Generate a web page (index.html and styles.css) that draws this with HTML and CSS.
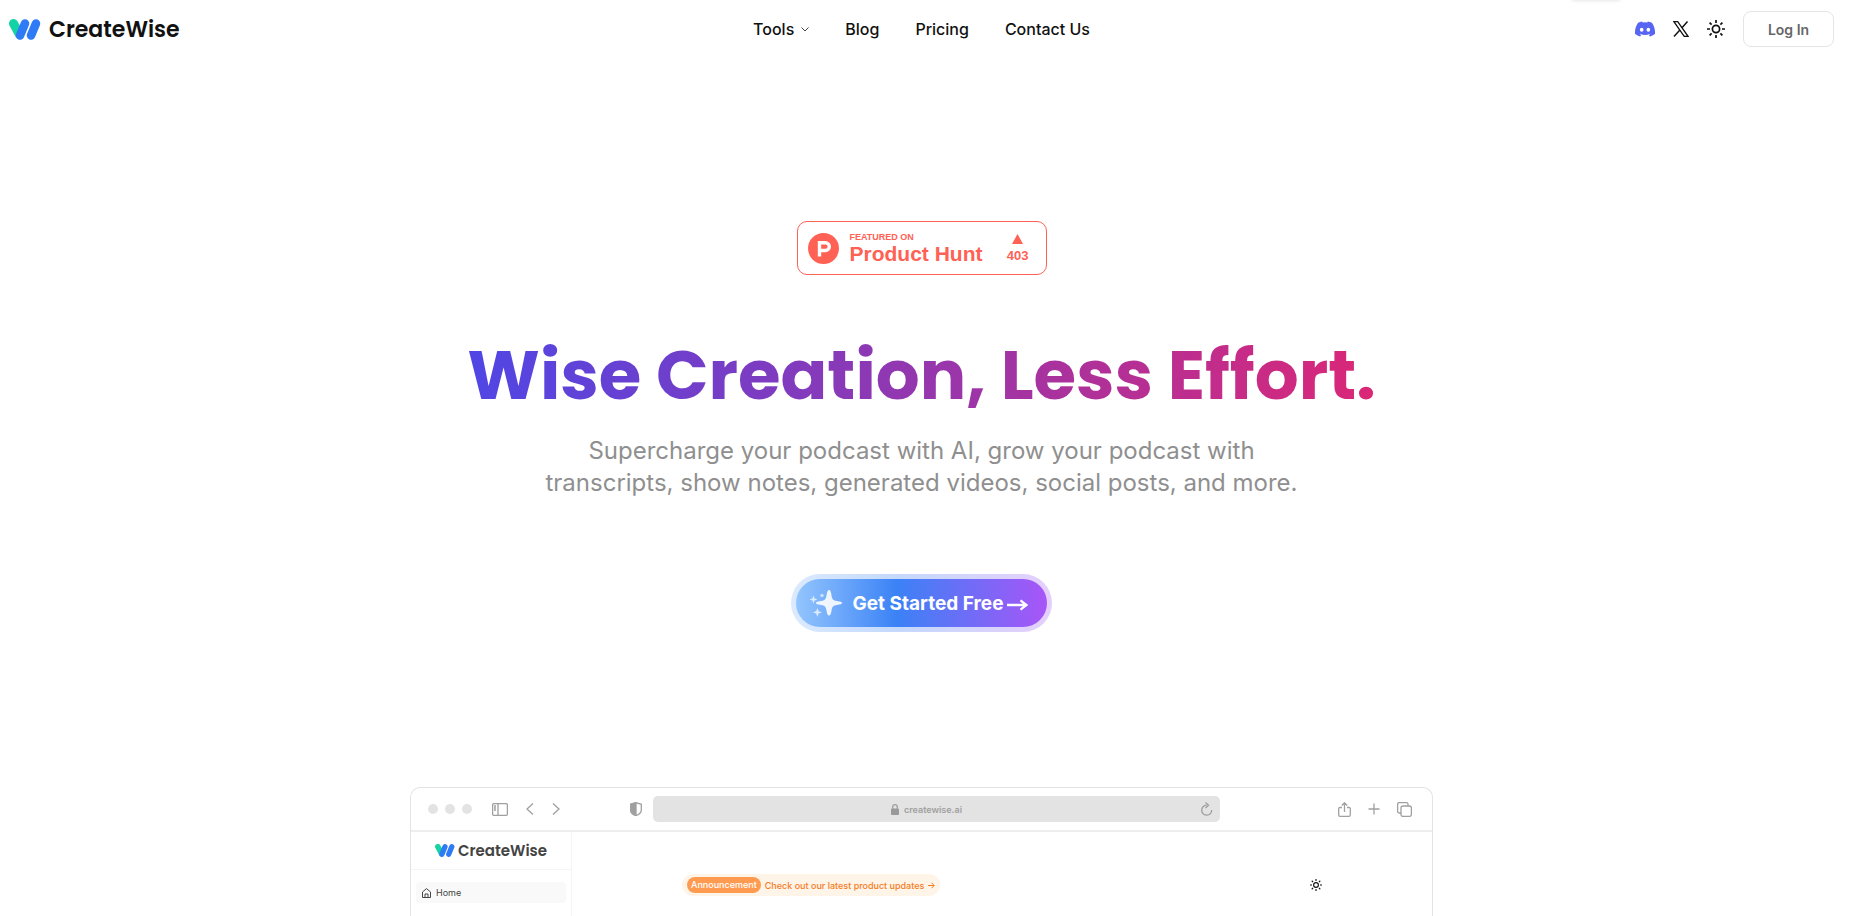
FILE: index.html
```html
<!DOCTYPE html>
<html lang="en">
<head>
    <meta charset="UTF-8">
    <meta name="viewport" content="width=device-width, initial-scale=1.0">
    <title>CreateWise</title>
    <link rel="stylesheet" href="styles.css">
</head>
<body>
    <!-- shared icons -->
    <svg class="sprite" aria-hidden="true">
        <symbol id="logo-mark" viewBox="0 0 32 21">
            <path d="M4.500 4.500 L10.500 15.500" stroke="#14d3a5" stroke-width="9" stroke-linecap="round"/>
            <path d="M16 4.500 L11 16.500 M27 4.500 L22 16.500" stroke="#2f7bf6" stroke-width="8.500" stroke-linecap="round"/>
        </symbol>
        <symbol id="sun" viewBox="0 0 18 18">
            <g fill="none" stroke="currentColor" stroke-width="1.700">
                <circle cx="9" cy="9" r="3.600"/>
                <path d="M9 0v3M9 15v3M0 9h3M15 9h3M2.600 2.600l2 2M13.400 13.400l2 2M2.600 15.400l2-2M13.400 4.600l2-2"/>
            </g>
        </symbol>
    </svg>

    <div class="top-shadow"></div>

    <header class="header">
        <a href="#" class="logo">
            <svg class="logo-mark"><use href="#logo-mark"/></svg>
            <span>CreateWise</span>
        </a>
        <nav class="nav">
            <button type="button" class="nav-tools">Tools
                <svg width="8" height="5" viewBox="0 0 8 5" fill="none" stroke="#444"><path d="M.5.500 4 4 7.500.500"/></svg>
            </button>
            <a href="#">Blog</a>
            <a href="#">Pricing</a>
            <a href="#">Contact Us</a>
        </nav>
        <div class="header-actions">
            <a href="#" aria-label="Discord">
                <svg width="20" height="16" viewBox="0 0 127 96" fill="#5865f2"><path d="M107.700 8.070A105.150 105.150 0 0 0 81.470 0a72 72 0 0 0-3.360 6.830 97.700 97.700 0 0 0-29.110 0A72 72 0 0 0 45.640 0a106 106 0 0 0-26.250 8.090C2.790 32.650-1.710 56.600.540 80.210A105.700 105.700 0 0 0 32.710 96.360a77.700 77.700 0 0 0 6.890-11.110 68.400 68.400 0 0 1-10.850-5.180c.910-.660 1.800-1.340 2.660-2a75.600 75.600 0 0 0 64.320 0c.870.710 1.760 1.390 2.660 2a68.700 68.700 0 0 1-10.870 5.190 77 77 0 0 0 6.890 11.100 105.300 105.300 0 0 0 32.190-16.140c2.640-27.380-4.510-51.110-18.900-72.150ZM42.450 65.690C36.180 65.690 31 60 31 53s5-12.740 11.430-12.740S54 46 53.890 53s-5.050 12.690-11.440 12.690Zm42.240 0C78.410 65.690 73.250 60 73.250 53s5-12.740 11.440-12.740S96.230 46 96.120 53s-5.040 12.690-11.430 12.690Z"/></svg>
            </a>
            <a href="#" aria-label="X">
                <svg width="16" height="16" viewBox="0 0 16 16" fill="none" stroke="#111"><path d="M.900.700H4.700L15 15.300H11.200Z" stroke-width="1.300"/><path d="M14.500.500 8.800 7M6.900 9.100 1 15.500" stroke-width="1.500"/></svg>
            </a>
            <button type="button" class="icon-button" aria-label="Switch theme">
                <svg width="18" height="18"><use href="#sun"/></svg>
            </button>
            <button type="button" class="login">Log In</button>
        </div>
    </header>

    <main class="hero">
        <a href="#" class="product-hunt">
            <svg width="31" height="31" viewBox="0 0 31 31"><circle cx="15.500" cy="15.500" r="15.500" fill="#ff6154"/><path d="M11.500 23.500V9.700h5.900a3.900 3.900 0 0 1 0 7.800H11.500" fill="none" stroke="#fff" stroke-width="3.400"/></svg>
            <span class="ph-label">
                <small>FEATURED ON</small>
                <strong>Product Hunt</strong>
            </span>
            <span class="ph-votes">
                <svg width="11" height="10" viewBox="0 0 11 10" fill="#ff6154"><path d="M5.500 0 11 10H0Z"/></svg>
                403
            </span>
        </a>

        <h1>Wise Creation, Less Effort.</h1>
        <p class="tagline">Supercharge your podcast with AI, grow your podcast with<br>transcripts, show notes, generated videos, social posts, and more.</p>

        <button type="button" class="cta">
            <svg width="32" height="28" viewBox="0 0 32 28" fill="#fff">
                <path opacity=".88" d="M19 1C20.500 1 21 3 21.500 6.500 22.200 10.500 23 11.300 27 12 30.500 12.500 32 13 32 14S30.500 15.500 27 16C23 16.700 22.200 17.500 21.500 21.500 21 25 20.500 26.500 19 26.500S17 25 16.500 21.500C15.800 17.500 15 16.700 11 16 7.500 15.500 6 15 6 14S7.500 12.500 11 12C15 11.300 15.800 10.500 16.500 6.500 17 3 17.500 1 19 1Z"/>
                <path opacity=".7" d="M3.500 6.500 4.600 9.400 7.500 10.500 4.600 11.600 3.500 14.500 2.400 11.600-.5 10.500 2.400 9.400ZM7.500 19 8.600 22.100 12 23.500 8.600 24.600 7.500 28 6.100 24.600 3 23.500 6.100 22.100Z"/>
                <circle cx="12" cy="6.500" r="1.700" opacity=".6"/>
            </svg>
            <span>Get Started Free</span>
            <svg class="cta-arrow" width="21" height="12" viewBox="0 0 21 12" fill="none" stroke="#fff" stroke-width="2.300"><path d="M0 6h19M13.500 1.300l6 4.700-6 4.700"/></svg>
        </button>

        <!-- app preview in a browser frame -->
        <section class="browser">
            <div class="toolbar">
                <div class="tool-group tool-left">
                    <span class="dots"><i></i><i></i><i></i></span>
                    <svg width="16" height="13" viewBox="0 0 16 13"><rect x=".6" y=".6" width="14.800" height="11.800" rx="1.500"/><path d="M6 .5v12M2 3h2M2 5h2M2 7h2"/></svg>
                    <svg class="back" width="8" height="12" viewBox="0 0 8 12"><path d="M7 .5 1 6l6 5.500"/></svg>
                    <svg class="forward" width="8" height="12" viewBox="0 0 8 12"><path d="M1 .5 7 6l-6 5.500"/></svg>
                </div>
                <svg class="shield" width="12" height="14" viewBox="0 0 12 14"><path d="M6 .7 11.300 2.300V8C11.300 10.500 9 12.500 6 13.500 3 12.500.7 10.500.7 8V2.300Z"/><path d="M6 .7V13.500C3 12.500.7 10.500.7 8V2.300Z" fill="#a0a0a0"/></svg>
                <div class="address">
                    <svg width="8" height="11" viewBox="0 0 8 11"><rect y="4.500" width="8" height="6.500" rx="1" fill="#999" stroke="none"/><path d="M1.700 5V3a2.300 2.300 0 0 1 4.600 0v2"/></svg>
                    <span>createwise.ai</span>
                    <svg class="reload" width="13" height="14" viewBox="0 0 13 14"><path d="M6.500 3.200A5 5 0 1 0 11.700 8M5.500 .5 8.500 3.200 5.500 6"/></svg>
                </div>
                <div class="tool-group tool-right">
                    <svg width="13" height="15" viewBox="0 0 13 15"><path d="M4 5.500H2A1.300 1.300 0 0 0 .700 7v6A1.300 1.300 0 0 0 2 14.300h9A1.300 1.300 0 0 0 12.300 13V7A1.300 1.300 0 0 0 11 5.500H9M6.500 10V1M3.800 3.500 6.500.800 9.200 3.500"/></svg>
                    <svg width="12" height="12" viewBox="0 0 12 12"><path d="M6 .5v11M.5 6h11"/></svg>
                    <svg width="15" height="15" viewBox="0 0 15 15"><rect x="4" y="4" width="10.400" height="10.400" rx="2"/><path d="M4 11H2.200A1.600 1.600 0 0 1 .6 9.400V2.200A1.600 1.600 0 0 1 2.200.600h7.200A1.600 1.600 0 0 1 11 2.200V4"/></svg>
                </div>
            </div>
            <div class="app">
                <aside class="sidebar">
                    <div class="app-logo">
                        <svg><use href="#logo-mark"/></svg>
                        <span>CreateWise</span>
                    </div>
                    <a href="#" class="menu-item">
                        <svg width="9" height="10" viewBox="0 0 9 10"><path d="M.5 4 4.500.600 8.500 4V9.500H.5ZM3 9.500V6h3v3.500"/></svg>
                        Home
                    </a>
                </aside>
                <div class="app-content">
                    <a href="#" class="announcement">
                        <span class="tag">Announcement</span>
                        Check out our latest product updates
                        <svg width="7" height="7" viewBox="0 0 7 7"><path d="M0 3.500h6M3.500.800 6.200 3.500 3.500 6.200"/></svg>
                    </a>
                    <svg class="app-sun" width="12" height="12"><use href="#sun"/></svg>
                </div>
            </div>
        </section>
    </main>
</body>
</html>
```
FILE: styles.css
```css
* {
    box-sizing: border-box;
}

body {
    margin: 0;
    padding-right: 15px;
    height: 100vh;
    overflow: hidden;
    display: flex;
    flex-direction: column;
    background: #fff;
    color: #111;
    font-family: Inter, "Liberation Sans", sans-serif;
}

a {
    color: inherit;
    text-decoration: none;
}

button {
    font-family: inherit;
    color: inherit;
    background: none;
    border: none;
    padding: 0;
    cursor: pointer;
}

svg {
    display: block;
    flex-shrink: 0;
}

.sprite {
    position: absolute;
    width: 0;
    height: 0;
}

.top-shadow {
    position: absolute;
    top: -10px;
    right: 236px;
    width: 52px;
    height: 10px;
    border-radius: 6px;
    box-shadow: 0 0 4px rgba(0, 0, 0, 0.15);
}

/* header */
.header {
    display: grid;
    grid-template-columns: 1fr auto 1fr;
    align-items: center;
    flex-shrink: 0;
    height: 58px;
    padding: 0 9px;
}

.logo {
    display: flex;
    align-items: center;
    gap: 8px;
    font-family: Poppins, Inter, sans-serif;
    font-size: 22px;
    font-weight: 600;
}

.logo-mark {
    width: 32px;
    height: 21px;
}

.nav {
    display: flex;
    align-items: center;
    gap: 36px;
    font-size: 16px;
    font-weight: 500;
}

.nav-tools {
    display: flex;
    align-items: center;
    gap: 7px;
    font-size: 16px;
    font-weight: 500;
}

.header-actions {
    display: flex;
    align-items: center;
    justify-content: flex-end;
    gap: 18px;
}

.login {
    width: 91px;
    height: 36px;
    border: 1px solid #e5e5e5;
    border-radius: 8px;
    font-size: 14px;
    font-weight: 600;
    color: #666;
}

/* hero */
.hero {
    flex: 1;
    min-height: 0;
    display: flex;
    flex-direction: column;
    align-items: center;
    padding-top: 163px;
}

.product-hunt {
    display: flex;
    align-items: center;
    flex-shrink: 0;
    width: 250px;
    height: 54px;
    padding: 0 17px 0 10px;
    border: 1px solid #ff6154;
    border-radius: 10px;
    color: #ff6154;
    font-family: "Liberation Sans", Arial, sans-serif;
    font-weight: bold;
}

.ph-label {
    display: flex;
    flex-direction: column;
    margin-left: 11px;
}

.ph-label small {
    font-size: 9px;
    line-height: 11px;
}

.ph-label strong {
    font-size: 21px;
    line-height: 22px;
}

.ph-votes {
    display: flex;
    flex-direction: column;
    align-items: center;
    gap: 4px;
    margin-left: auto;
    font-size: 13px;
    line-height: 15px;
}

h1 {
    margin: 54px 0 0;
    font-family: Poppins, Inter, sans-serif;
    font-size: 69px;
    font-weight: 700;
    line-height: 92px;
    white-space: nowrap;
    color: transparent;
    background: linear-gradient(to right, #4f46e5, #db2777);
    -webkit-background-clip: text;
    background-clip: text;
}

.tagline {
    margin: 14px 0 0;
    font-size: 24px;
    line-height: 32px;
    text-align: center;
    color: #8f8f8f;
}

.cta {
    display: flex;
    align-items: center;
    flex-shrink: 0;
    height: 58px;
    margin-top: 75px;
    padding: 0 19px 0 14px;
    border: 5px solid transparent;
    border-radius: 29px;
    background:
        linear-gradient(to right, #93c5fd, #3b82f6 40%, #a855f7) padding-box,
        linear-gradient(to right, #dbeafe, #c4d9fc 40%, #e5cffc) border-box;
    color: #fff;
    font-size: 19px;
    font-weight: 700;
}

.cta span {
    margin-left: 11px;
}

.cta-arrow {
    margin: 3px 0 0 4px;
}

/* browser frame */
.browser {
    flex: 1;
    display: flex;
    flex-direction: column;
    width: 100%;
    max-width: 1023px;
    margin-top: 155px;
    border: 1px solid #e3e3e3;
    border-bottom: none;
    border-radius: 10px 10px 0 0;
}

.browser svg {
    fill: none;
    stroke: currentColor;
}

.toolbar {
    display: flex;
    align-items: center;
    height: 44px;
    padding: 0 20px 0 17px;
    border-bottom: 2px solid #eee;
    color: #a0a0a0;
}

.toolbar svg {
    stroke-width: 1.3;
}

.tool-group {
    display: flex;
    align-items: center;
}

.tool-left {
    width: 202px;
}

.dots {
    display: flex;
    gap: 7px;
    margin-right: 20px;
}

.dots i {
    width: 10px;
    height: 10px;
    border-radius: 50%;
    background: #e3e3e3;
}

.back {
    margin-left: 18px;
}

.forward {
    margin-left: 18px;
}

.address {
    flex: 1;
    position: relative;
    display: flex;
    align-items: center;
    justify-content: center;
    gap: 5px;
    height: 26px;
    margin-left: 11px;
    padding-right: 20px;
    border-radius: 5px;
    background: #e3e3e3;
    font-size: 9px;
    font-weight: 600;
}

.reload {
    position: absolute;
    right: 7px;
}

.tool-right {
    justify-content: flex-end;
    gap: 17px;
    width: 192px;
}

.app {
    flex: 1;
    display: flex;
}

.sidebar {
    width: 161px;
    border-right: 1px solid #f5f5f5;
}

.app-logo {
    display: flex;
    align-items: center;
    justify-content: center;
    gap: 3px;
    height: 38px;
    border-bottom: 1px solid #f5f5f5;
    font-family: Poppins, Inter, sans-serif;
    font-size: 15px;
    font-weight: 600;
    color: #444;
}

.app-logo svg {
    width: 20px;
    height: 13px;
}

.app-logo use {
    stroke: none;
}

.menu-item {
    display: flex;
    align-items: center;
    gap: 5px;
    height: 21px;
    margin: 12px 5px;
    padding: 0 6px;
    border-radius: 4px;
    background: #f9f9f9;
    font-size: 9px;
    color: #444;
}

.app-content {
    flex: 1;
    display: flex;
    align-items: flex-start;
    justify-content: space-between;
    padding: 42px 110px 0;
}

.announcement {
    display: flex;
    align-items: center;
    gap: 4px;
    height: 22px;
    padding: 0 5px;
    border-radius: 11px;
    background: #fff4e8;
    color: #f57c1f;
    font-size: 9px;
    font-weight: 500;
}

.tag {
    padding: 0 4px;
    border-radius: 8px;
    background: #ff9b50;
    color: #fff;
    line-height: 16px;
}

.app-sun {
    margin-top: 5px;
    color: #111;
}
```
